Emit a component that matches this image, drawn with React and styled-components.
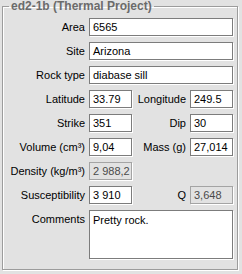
import styled, { createGlobalStyle } from "styled-components";

const GlobalStyle = createGlobalStyle`
  html, body {
    margin: 0;
    padding: 0;
    background: #e2e2e2;
    font-family: "Liberation Sans", Arial, sans-serif;
  }
`;

const Page = styled.div`
  width: 242px;
  height: 274px;
  padding: 0 4px 0 2px;
  box-sizing: border-box;
`;

const Frame = styled.fieldset`
  margin: 0;
  padding: 5px 4px 10px 2px;
  border: 1px solid #9c9c9c;
  box-shadow: 1px 1px 0 #fff, inset 1px 1px 0 #fff;
  min-width: 0;
`;

const Legend = styled.legend`
  margin-left: 4px;
  padding: 0 2px;
  font-size: 12px;
  line-height: 13px;
  font-weight: bold;
  color: #6b6b6b;
`;

const Grid = styled.div`
  display: grid;
  grid-template-columns: 80px 43px 1fr 43px;
  grid-template-rows: repeat(8, 18px) auto;
  column-gap: 4px;
  row-gap: 6px;
`;

const Label = styled.label`
  display: flex;
  align-items: ${(p) => (p.$top ? "flex-start" : "center")};
  justify-content: flex-end;
  padding-top: ${(p) => (p.$top ? "3px" : "0")};
  font-size: 11px;
  color: #000;
  white-space: nowrap;
`;

const Field = styled.div`
  grid-column: ${(p) => (p.$wide ? "span 3" : "auto")};
  display: flex;
  align-items: center;
  box-sizing: border-box;
  padding: 0 3px;
  font-size: 11px;
  border: 1px solid ${(p) => (p.$disabled ? "#a4a4a4" : "#7c7c7c")};
  background: ${(p) => (p.$disabled ? "#e2e2e2" : "#fff")};
  color: ${(p) => (p.$disabled ? "#4a4a4a" : "#000")};
  box-shadow: 1px 1px 0 #fff;
  white-space: nowrap;
  overflow: hidden;
`;

const Spacer = styled.div`
  grid-column: span 2;
`;

const TextArea = styled.div`
  grid-column: span 3;
  height: 49px;
  box-sizing: border-box;
  padding: 3px 3px;
  font-size: 11px;
  line-height: 13px;
  border: 1px solid #7c7c7c;
  background: #fff;
  box-shadow: 1px 1px 0 #fff;
`;

const Row = ({ label, value, wide, disabled }) => (
  <>
    <Label>{label}</Label>
    <Field $wide={wide} $disabled={disabled}>{value}</Field>
  </>
);

export default function App() {
  return (
    <Page>
      <GlobalStyle />
      <Frame>
        <Legend>ed2-1b (Thermal Project)</Legend>
        <Grid>
          <Row label="Area" value="6565" wide />
          <Row label="Site" value="Arizona" wide />
          <Row label="Rock type" value="diabase sill" wide />
          <Row label="Latitude" value="33.79" />
          <Row label="Longitude" value="249.5" />
          <Row label="Strike" value="351" />
          <Row label="Dip" value="30" />
          <Row label="Volume (cm³)" value="9,04" />
          <Row label="Mass (g)" value="27,014" />
          <Row label="Density (kg/m³)" value="2 988,2" disabled />
          <Spacer />
          <Row label="Susceptibility" value="3 910" />
          <Row label="Q" value="3,648" disabled />
          <Label $top>Comments</Label>
          <TextArea>Pretty rock.</TextArea>
        </Grid>
      </Frame>
    </Page>
  );
}
